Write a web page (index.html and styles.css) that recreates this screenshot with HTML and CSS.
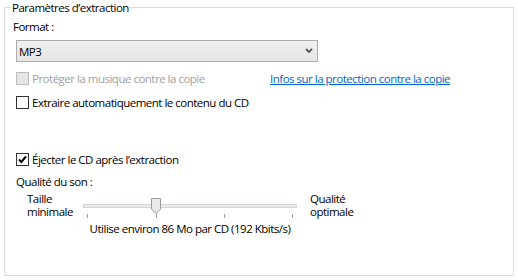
FILE: index.html
```html
<!DOCTYPE html>
<html lang="fr">
<head>
<meta charset="utf-8">
<link rel="stylesheet" href="styles.css">
</head>
<body>
<fieldset class="group">
  <legend class="group-title">Paramètres d’extraction</legend>
  <div class="label format-label">Format :</div>
  <div class="select">
    <span class="select-value">MP3</span>
    <svg class="chevron" width="8" height="6" viewBox="0 0 8 6"><polyline points="1,1 4,4 7,1" fill="none" stroke="#555" stroke-width="1.8"/></svg>
  </div>
  <div class="row row-protect">
    <span class="protect-part">
      <span class="check disabled"></span>
      <span class="check-label disabled-text">Protéger la musique contre la copie</span>
    </span>
    <a class="link" href="#">Infos sur la protection contre la copie</a>
  </div>
  <div class="row row-auto">
    <span class="check"></span>
    <span class="check-label">Extraire automatiquement le contenu du CD</span>
  </div>
  <div class="row row-eject">
    <span class="check">
      <svg width="11" height="11" viewBox="0 0 11 11"><polyline points="2,5.5 4.3,8 9,2.5" fill="none" stroke="#000" stroke-width="2"/></svg>
    </span>
    <span class="check-label">Éjecter le CD après l’extraction</span>
  </div>
  <div class="label quality-label">Qualité du son :</div>
  <div class="slider-grid">
    <div class="side-label left"><div>Taille</div><div>minimale</div></div>
    <div class="slider">
      <div class="track"></div>
      <svg class="thumb" width="10" height="16" viewBox="0 0 10 16"><path d="M0.5 0.5 H9.5 V11 L5 15.5 L0.5 11 Z" fill="#e9e9e9" stroke="#9a9a9a"/></svg>
      <span class="tick" style="left:4px"></span>
      <span class="tick" style="left:73px"></span>
      <span class="tick" style="left:141px"></span>
      <span class="tick" style="left:209px"></span>
    </div>
    <div class="side-label right"><div>Qualité</div><div>optimale</div></div>
    <div class="usage">Utilise environ 86 Mo par CD (192 Kbits/s)</div>
  </div>
</fieldset>
</body>
</html>
```
FILE: styles.css
```css
html, body {
  margin: 0;
  padding: 0;
  background: #ffffff;
}
body {
  width: 518px;
  height: 280px;
  font-family: "Open Sans", "Noto Sans", sans-serif;
  font-size: 11.5px;
  letter-spacing: -0.5px;
  color: #000;
  overflow: hidden;
}
.group {
  margin: 0 4px;
  box-sizing: border-box;
  width: 510px;
  height: 276px;
  border: 1px solid #dcdcdc;
  padding: 0 6px 0 11px;
  min-width: 0;
}
.group-title {
  padding: 0 1px;
  margin-left: -5px;
  line-height: 15px;
}
.label {
  line-height: 15px;
}
.format-label {
  margin-top: 4px;
  margin-left: -3px;
}
.select {
  margin-top: 6px;
  box-sizing: border-box;
  width: 302px;
  height: 22px;
  border: 1px solid #acacac;
  background: linear-gradient(#f0f0f0, #e5e5e5);
  display: flex;
  align-items: center;
  justify-content: space-between;
  padding: 0 4px 0 2px;
}
.select-value {
  line-height: 15px;
}
.row {
  display: flex;
  align-items: center;
  height: 15px;
}
.protect-part {
  display: flex;
  align-items: center;
  width: 254px;
  flex: none;
}
.row-protect { margin-top: 9px; }
.row-auto { margin-top: 9px; }
.row-eject { margin-top: 42px; }
.check {
  box-sizing: border-box;
  width: 13px;
  height: 13px;
  border: 1px solid #333;
  background: #fff;
  display: flex;
  align-items: center;
  justify-content: center;
  flex: none;
}
.check.disabled {
  border-color: #bcbcbc;
  background: #e6e6e6;
}
.check-label {
  margin-left: 3px;
  line-height: 15px;
  white-space: nowrap;
}
.disabled-text {
  color: #a0a0a0;
}
.link {
  color: #0066cc;
  text-decoration: underline;
  white-space: nowrap;
}
.quality-label {
  margin-top: 7px;
}
.slider-grid {
  margin-top: 3px;
  display: grid;
  grid-template-columns: 56px 214px auto;
  margin-left: 11px;
}
.side-label {
  display: flex;
  flex-direction: column;
  gap: 0;
}
.side-label div {
  height: 13px;
  line-height: 13px;
}
.side-label.right {
  margin-left: 13px;
}
.slider {
  position: relative;
  height: 26px;
}
.track {
  position: absolute;
  left: 0;
  right: 0;
  top: 12px;
  height: 4px;
  box-sizing: border-box;
  border: 1px solid #d6d6d6;
  background: #e7eaea;
}
.thumb {
  position: absolute;
  left: 68px;
  top: 6px;
}
.tick {
  position: absolute;
  top: 22px;
  width: 1px;
  height: 4px;
  background: #a0a0a0;
}
.usage {
  grid-column: 2;
  text-align: center;
  line-height: 15px;
  margin-top: 3px;
  white-space: nowrap;
}
```
